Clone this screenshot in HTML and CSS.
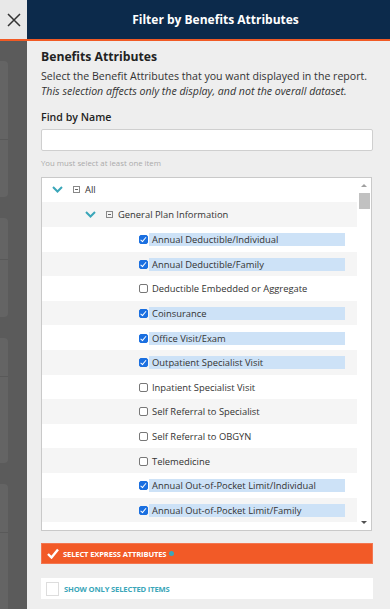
FILE: index.html
```html
<!DOCTYPE html>
<html lang="en">
<head>
<meta charset="utf-8">
<title>Filter by Benefits Attributes</title>
<link rel="stylesheet" href="styles.css">
</head>
<body>
<div class="topbar">
  <button class="close" aria-label="Close">
    <svg width="14" height="14" viewBox="0 0 14 14"><path d="M1 1 L13 13 M13 1 L1 13" stroke="#333" stroke-width="1.5" fill="none"/></svg>
  </button>
  <div class="title">Filter by Benefits Attributes</div>
</div>
<div class="main">
  <div class="shade">
    <div class="card c1"><div class="card-head h1"></div></div>
    <div class="card c2"><div class="card-head h2"></div></div>
    <div class="card c3"><div class="card-head h3"></div></div>
    <div class="card c4"><div class="card-head h4"></div></div>
  </div>
  <div class="panel">
    <h2 class="heading">Benefits Attributes</h2>
    <p class="desc">Select the Benefit Attributes that you want displayed in the report.<br><em>This selection affects only the display, and not the overall dataset.</em></p>
    <label class="find-label" for="find">Find by Name</label>
    <input id="find" class="find" type="text">
    <div class="hint">You must select at least one item</div>
    <div class="tree">
      <div class="list">
        <div class="row lvl0 odd">
          <svg class="chev" width="11" height="7" viewBox="0 0 11 7"><path d="M1 1 L5.5 5.5 L10 1" stroke="#3aa6b9" stroke-width="2" fill="none"/></svg>
          <span class="minus"></span><span class="text">All</span>
        </div>
        <div class="row lvl1 even">
          <svg class="chev" width="11" height="7" viewBox="0 0 11 7"><path d="M1 1 L5.5 5.5 L10 1" stroke="#3aa6b9" stroke-width="2" fill="none"/></svg>
          <span class="minus"></span><span class="text">General Plan Information</span>
        </div>
        <div class="row item odd"><span class="cb on"></span><span class="lbl sel">Annual Deductible/Individual</span></div>
        <div class="row item even"><span class="cb on"></span><span class="lbl sel">Annual Deductible/Family</span></div>
        <div class="row item odd"><span class="cb"></span><span class="lbl">Deductible Embedded or Aggregate</span></div>
        <div class="row item even"><span class="cb on"></span><span class="lbl sel">Coinsurance</span></div>
        <div class="row item odd"><span class="cb on"></span><span class="lbl sel">Office Visit/Exam</span></div>
        <div class="row item even"><span class="cb on"></span><span class="lbl sel">Outpatient Specialist Visit</span></div>
        <div class="row item odd"><span class="cb"></span><span class="lbl">Inpatient Specialist Visit</span></div>
        <div class="row item even"><span class="cb"></span><span class="lbl">Self Referral to Specialist</span></div>
        <div class="row item odd"><span class="cb"></span><span class="lbl">Self Referral to OBGYN</span></div>
        <div class="row item even"><span class="cb"></span><span class="lbl">Telemedicine</span></div>
        <div class="row item odd"><span class="cb on"></span><span class="lbl sel">Annual Out-of-Pocket Limit/Individual</span></div>
        <div class="row item even"><span class="cb on"></span><span class="lbl sel">Annual Out-of-Pocket Limit/Family</span></div>
        <div class="row item odd"><span class="cb"></span><span class="lbl"></span></div>
      </div>
      <div class="scrollbar">
        <span class="arrow up"></span>
        <span class="thumb"></span>
        <span class="track"></span>
        <span class="arrow down"></span>
      </div>
    </div>
    <button class="express">
      <svg class="tick" width="12" height="11" viewBox="0 0 12 11"><path d="M1 6 L4.5 9.5 L11 1.5" stroke="#fff" stroke-width="2.4" fill="none"/></svg>
      <span>SELECT EXPRESS ATTRIBUTES</span><span class="info"></span>
    </button>
    <div class="only">
      <span class="only-box"></span><span class="only-text">SHOW ONLY SELECTED ITEMS</span>
    </div>
  </div>
</div>
</body>
</html>
```
FILE: styles.css
```css
* { box-sizing: border-box; }
html, body { margin: 0; padding: 0; }
body {
  width: 390px;
  height: 609px;
  overflow: hidden;
  font-family: "Open Sans", "Noto Sans", sans-serif;
  background: #eeeeee;
  color: #333;
}
.topbar {
  display: flex;
  height: 41px;
  border-bottom: 2px solid #f15a24;
}
.close {
  width: 27px;
  border: 0;
  padding: 0;
  background: #e8e8e8;
  display: flex;
  align-items: center;
  justify-content: center;
}
.title {
  flex: 1;
  background: #0c2a4b;
  color: #fff;
  font-weight: 700;
  font-size: 12px;
  display: flex;
  align-items: center;
  justify-content: center;
  padding-left: 14px;
}
.main {
  display: flex;
  height: 568px;
}
.shade {
  width: 27px;
  background: #5b5b5b;
  display: flex;
  flex-direction: column;
  gap: 21px;
  padding-top: 20px;
  overflow: hidden;
}
.card {
  width: 8px;
  background: #646464;
  border-radius: 0 4px 4px 0;
  flex: none;
}
.card-head { border-bottom: 1px solid #595959; }
.c1 { height: 136px; } .h1 { height: 79px; }
.c2 { height: 99px; } .h2 { height: 42px; }
.c3 { height: 125px; } .h3 { height: 39px; }
.c4 { height: 130px; } .h4 { height: 49px; }
.panel {
  flex: 1;
  padding: 7px 17px 0 14px;
  display: flex;
  flex-direction: column;
}
.heading {
  margin: 0;
  font-size: 12.2px;
  line-height: 18px;
  font-weight: 700;
  color: #222;
}
.desc {
  margin: 3px 0 0;
  font-size: 10.6px;
  line-height: 15px;
  color: #333;
}
.find-label {
  margin-top: 10px;
  font-size: 10.6px;
  line-height: 16px;
  font-weight: 600;
  color: #222;
}
.find {
  margin-top: 4px;
  height: 22px;
  width: 332px;
  border: 1px solid #cfcfcf;
  border-radius: 2px;
  background: #fff;
}
.hint {
  margin-top: 6px;
  font-size: 7.8px;
  line-height: 12px;
  color: #aaa;
}
.tree {
  margin-top: 8px;
  width: 331px;
  height: 354px;
  border: 1px solid #c9c9c9;
  background: #fff;
  display: flex;
  flex: none;
}
.list {
  flex: 1;
  overflow: hidden;
}
.row {
  display: flex;
  align-items: center;
  height: 24.6px;
  font-size: 9.4px;
  color: #333;
}
.row.odd { background: #fff; }
.row.even { background: #f5f5f5; }
.row.lvl0 { height: 23.5px; padding-left: 10px; }
.row.lvl1 { height: 25.5px; padding-left: 43px; }
.row.item { padding-left: 97px; }
.chev { margin-right: 10px; flex: none; }
.minus {
  width: 7px;
  height: 7px;
  border: 1px solid #888;
  position: relative;
  margin-right: 5px;
  flex: none;
}
.minus::after {
  content: "";
  position: absolute;
  left: 1px;
  right: 1px;
  top: 2px;
  height: 1px;
  background: #666;
}
.cb {
  width: 9px;
  height: 9px;
  border: 1px solid #777;
  border-radius: 2px;
  background: #fff;
  flex: none;
  position: relative;
  margin-top: 1px;
}
.cb.on {
  background: #1a6fe0;
  border-color: #1a6fe0;
}
.cb.on::after {
  content: "";
  position: absolute;
  left: 2px;
  top: 0px;
  width: 2px;
  height: 4.5px;
  border: solid #fff;
  border-width: 0 1.5px 1.5px 0;
  transform: rotate(40deg);
}
.lbl {
  margin-left: 1px;
  padding: 0 3px;
  line-height: 13px;
  height: 13px;
  width: 196px;
  white-space: nowrap;
  margin-top: 1px;
}
.lbl.sel { background: #cde2f7; }
.scrollbar {
  width: 14px;
  background: #fff;
  display: flex;
  flex-direction: column;
  align-items: center;
  padding: 4px 1px 4px 1px;
}
.arrow {
  width: 0;
  height: 0;
  border-left: 3px solid transparent;
  border-right: 3px solid transparent;
  flex: none;
}
.arrow.up { border-bottom: 3px solid #a0a0a0; margin-top: 2px; }
.arrow.down { border-top: 3px solid #505050; margin-bottom: 2px; }
.thumb {
  width: 11px;
  height: 16px;
  background: #c1c1c1;
  margin-top: 6px;
  flex: none;
}
.track { flex: 1; }
.express {
  margin-top: 12px;
  width: 332px;
  height: 21px;
  border: 1px solid #f37650;
  background: #f25a27;
  color: #fff;
  display: flex;
  align-items: center;
  padding: 0 0 0 5px;
  font-family: "Open Sans", sans-serif;
  font-weight: 700;
  font-size: 7.6px;
  letter-spacing: -0.15px;
  flex: none;
}
.tick { margin-right: 4px; }
.info {
  width: 5px;
  height: 5px;
  border-radius: 50%;
  background: #3aa6b9;
  margin-left: 3px;
}
.only {
  margin-top: 14px;
  width: 332px;
  height: 21px;
  background: #fff;
  display: flex;
  align-items: center;
  padding-left: 5px;
  flex: none;
}
.only-box {
  width: 13px;
  height: 14px;
  border: 1px solid #ddd;
  background: #fff;
  margin-right: 5px;
}
.only-text {
  color: #3aa6b9;
  font-weight: 700;
  font-size: 7.6px;
  letter-spacing: -0.15px;
}
```
